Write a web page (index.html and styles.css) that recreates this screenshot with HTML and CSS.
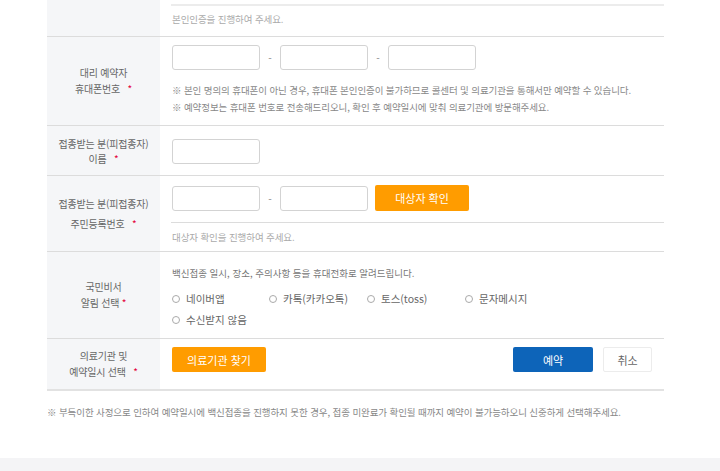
FILE: index.html
```html
<!DOCTYPE html>
<html lang="ko">
<head>
<meta charset="utf-8">
<link rel="stylesheet" href="styles.css">
</head>
<body>
<div class="wrap">
  <div class="table">
    <div class="row row-top">
      <div class="label"></div>
      <div class="cell">
        <div class="subline"></div>
        <p class="hint">본인인증을 진행하여 주세요.</p>
      </div>
    </div>

    <div class="row row-phone">
      <div class="label"><span>대리 예약자</span><span>휴대폰번호 <em>*</em></span></div>
      <div class="cell">
        <div class="inputs">
          <input class="box" type="text"><span class="dash">-</span><input class="box" type="text"><span class="dash">-</span><input class="box" type="text">
        </div>
        <p class="note note-first">※ 본인 명의의 휴대폰이 아닌 경우, 휴대폰 본인인증이 불가하므로 콜센터 및 의료기관을 통해서만 예약할 수 있습니다.</p>
        <p class="note">※ 예약정보는 휴대폰 번호로 전송해드리오니, 확인 후 예약일시에 맞춰 의료기관에 방문해주세요.</p>
      </div>
    </div>

    <div class="row row-name">
      <div class="label label-tight"><span>접종받는 분(피접종자)</span><span>이름 <em>*</em></span></div>
      <div class="cell">
        <input class="box" type="text">
      </div>
    </div>

    <div class="row row-rrn">
      <div class="label label-wide"><span>접종받는 분(피접종자)</span><span>주민등록번호 <em>*</em></span></div>
      <div class="cell">
        <div class="inputs">
          <input class="box" type="text"><span class="dash">-</span><input class="box" type="text"><button class="btn btn-orange btn-check" type="button">대상자 확인</button>
        </div>
        <div class="subline subline-mid"></div>
        <p class="hint">대상자 확인을 진행하여 주세요.</p>
      </div>
    </div>

    <div class="row row-alarm">
      <div class="label"><span>국민비서</span><span>알림 선택 <em class="near">*</em></span></div>
      <div class="cell">
        <p class="desc">백신접종 일시, 장소, 주의사항 등을 휴대전화로 알려드립니다.</p>
        <div class="radios">
          <label class="radio"><span class="dot"></span>네이버앱</label>
          <label class="radio"><span class="dot"></span>카톡(카카오톡)</label>
          <label class="radio"><span class="dot"></span>토스(toss)</label>
          <label class="radio"><span class="dot"></span>문자메시지</label>
          <label class="radio"><span class="dot"></span>수신받지 않음</label>
        </div>
      </div>
    </div>

    <div class="row row-hosp">
      <div class="label"><span>의료기관 및</span><span>예약일시 선택 <em>*</em></span></div>
      <div class="cell cell-actions">
        <button class="btn btn-orange btn-find" type="button">의료기관 찾기</button>
        <div class="actions">
          <button class="btn btn-blue" type="button">예약</button>
          <button class="btn btn-cancel" type="button">취소</button>
        </div>
      </div>
    </div>
  </div>
  <p class="footnote">※ 부득이한 사정으로 인하여 예약일시에 백신접종을 진행하지 못한 경우, 접종 미완료가 확인될 때까지 예약이 불가능하오니 신중하게 선택해주세요.</p>
</div>
<div class="band"></div>
</body>
</html>
```

FILE: styles.css
```css
* { box-sizing: border-box; }
html, body { margin: 0; padding: 0; background: #fff; }
body {
  font-family: "Noto Sans CJK KR", "Noto Sans", sans-serif;
  color: #666;
  height: 471px;
  overflow: hidden;
  display: flex;
  flex-direction: column;
}
p { margin: 0; }
.wrap { margin-left: 47px; width: 617px; flex: 1; }
.table { border-bottom: 2px solid #e2e2e2; }
.row {
  display: grid;
  grid-template-columns: 113px 1fr;
  border-top: 1px solid #dcdcdc;
}
.row-top { border-top: 0; height: 36px; }
.label {
  background: #f5f6f8;
  display: flex;
  flex-direction: column;
  align-items: center;
  justify-content: center;
  font-size: 10px;
  line-height: 16px;
  color: #666;
  letter-spacing: -0.2px;
}
.label em { color: #e4003a; font-style: normal; margin-left: 5px; }
.label em.near { margin-left: 0; }
.label-tight { line-height: 15px; }
.label-wide { line-height: 20px; }
.cell { padding-left: 12px; }
.subline { border-top: 2px solid #ececec; margin-left: -1px; }
.row-top .subline { margin-top: 4px; }
.hint {
  font-size: 9.5px;
  color: #aaa;
  line-height: 17px;
  margin-top: 5px;
  letter-spacing: -0.1px;
}
.inputs { display: flex; align-items: center; }
.box {
  width: 88px;
  height: 25px;
  border: 1px solid #d3d3d3;
  border-radius: 3px;
  background: #fff;
  margin: 0;
  padding: 0;
}
.dash { width: 20px; text-align: center; font-size: 10px; color: #888; }
.row-phone .cell { padding-top: 8px; padding-bottom: 9px; }
.note {
  font-size: 9.5px;
  line-height: 17px;
  color: #888;
  letter-spacing: -0.1px;
}
.note-first { margin-top: 12px; }
.row-name .cell { padding-top: 11px; padding-bottom: 11px; }
.row-rrn .cell { padding-top: 9px; padding-bottom: 5px; }
.btn {
  border: 0;
  margin: 0;
  padding: 0;
  font-family: "Noto Sans CJK KR", "Noto Sans", sans-serif;
  cursor: pointer;
}
.btn-orange {
  background: #ff9c00;
  color: #fff;
  font-size: 11px;
  border-radius: 2px;
}
.btn-check { width: 94px; height: 26px; margin-left: 7px; }
.subline-mid { border-top-width: 1px; border-color: #dcdcdc; margin-top: 11px; }
.row-rrn .hint { margin-top: 6px; }
.row-alarm .cell { padding-top: 13px; padding-bottom: 10px; }
.desc {
  font-size: 9.5px;
  line-height: 16px;
  color: #777;
  letter-spacing: 0;
}
.radios {
  display: grid;
  grid-template-columns: 97px 98px 98px 98px;
  row-gap: 5px;
  margin-top: 10px;
}
.radio {
  display: flex;
  align-items: center;
  font-size: 10.5px;
  line-height: 16px;
  color: #666;
}
.dot {
  width: 8px;
  height: 8px;
  border: 1px solid #aaa;
  border-radius: 50%;
  margin-right: 6px;
  flex: none;
}
.cell-actions {
  display: flex;
  align-items: center;
  justify-content: space-between;
  padding-top: 8px;
  padding-bottom: 17px;
  padding-right: 12px;
}
.btn-find { width: 94px; height: 25px; }
.actions { display: flex; gap: 10px; }
.btn-blue {
  width: 80px;
  height: 25px;
  background: #0d64b9;
  color: #fff;
  font-size: 11px;
  border-radius: 2px;
}
.btn-cancel {
  width: 49px;
  height: 25px;
  background: #fff;
  border: 1px solid #ececec;
  color: #666;
  font-size: 11px;
  border-radius: 2px;
}
.footnote {
  font-size: 9.5px;
  line-height: 16px;
  color: #888;
  margin-top: 13px;
  letter-spacing: -0.1px;
}
.band { height: 13px; background: #f4f4f6; flex: none; }
```
